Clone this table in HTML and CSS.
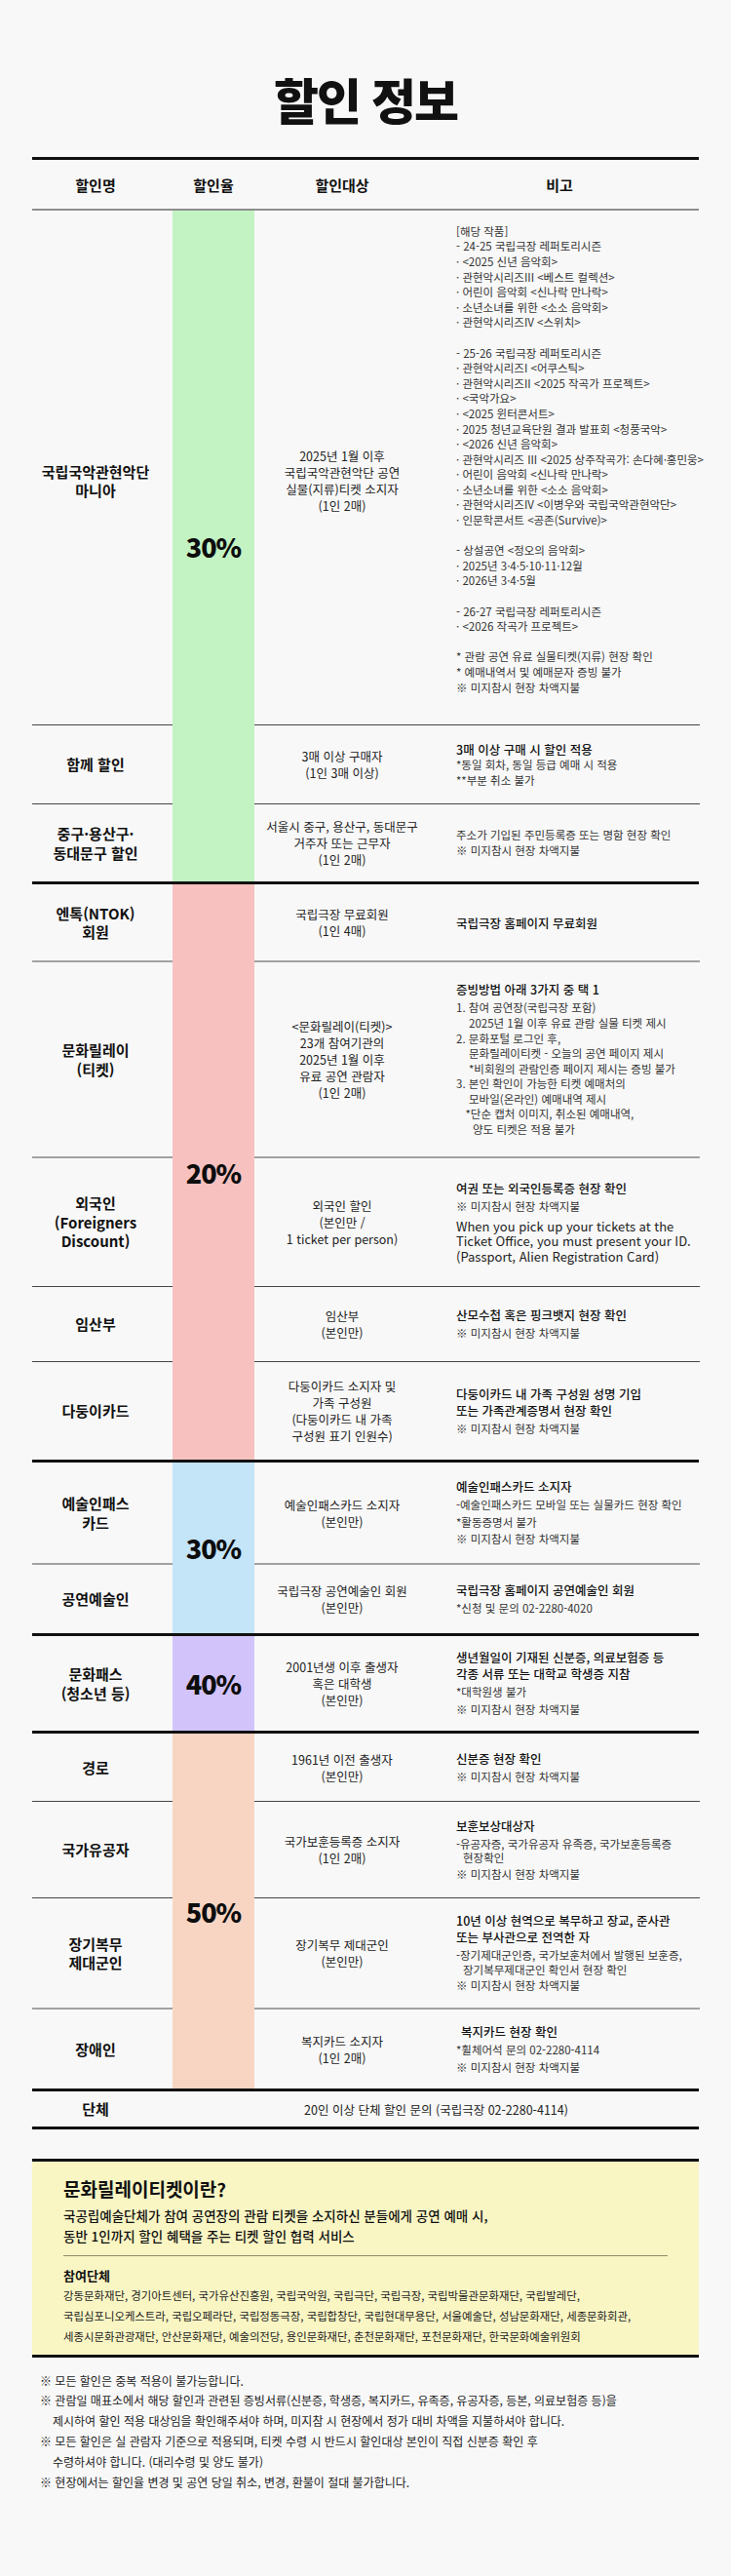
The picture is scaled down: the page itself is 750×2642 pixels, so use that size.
FILE: index.html
```html
<!DOCTYPE html>
<html lang="ko">
<head>
<meta charset="utf-8">
<title>할인 정보</title>
<link rel="stylesheet" href="styles.css">
</head>
<body>
<main class="page">
  <h1 class="title">할인 정보</h1>

  <section class="table">
    <div class="head">
      <div class="hc1">할인명</div>
      <div>할인율</div>
      <div>할인대상</div>
      <div class="hc4">비고</div>
    </div>

    <div class="grp g1">
      <div class="rate green">30%</div>
      <div class="row mania">
        <div class="lab"><p>국립국악관현악단<br>마니아</p></div>
        <div class="tgt"><p>2025년 1월 이후<br>국립국악관현악단 공연<br>실물(지류)티켓 소지자<br>(1인 2매)</p></div>
        <div class="rm long"><p>[해당 작품]<br>- 24-25 국립극장 레퍼토리시즌<br>· &lt;2025 신년 음악회&gt;<br>· 관현악시리즈III &lt;베스트 컬렉션&gt;<br>· 어린이 음악회 &lt;신나락 만나락&gt;<br>· 소년소녀를 위한 &lt;소소 음악회&gt;<br>· 관현악시리즈IV &lt;스위치&gt;<br><br>- 25-26 국립극장 레퍼토리시즌<br>· 관현악시리즈I &lt;어쿠스틱&gt;<br>· 관현악시리즈II &lt;2025 작곡가 프로젝트&gt;<br>· &lt;국악가요&gt;<br>· &lt;2025 윈터콘서트&gt;<br>· 2025 청년교육단원 결과 발표회 &lt;청풍국악&gt;<br>· &lt;2026 신년 음악회&gt;<br>· 관현악시리즈 III &lt;2025 상주작곡가: 손다혜·홍민웅&gt;<br>· 어린이 음악회 &lt;신나락 만나락&gt;<br>· 소년소녀를 위한 &lt;소소 음악회&gt;<br>· 관현악시리즈IV &lt;이병우와 국립국악관현악단&gt;<br>· 인문학콘서트 &lt;공존(Survive)&gt;<br><br>- 상설공연 &lt;정오의 음악회&gt;<br>· 2025년 3·4·5·10·11·12월<br>· 2026년 3·4·5월<br><br>- 26-27 국립극장 레퍼토리시즌<br>· &lt;2026 작곡가 프로젝트&gt;<br><br>* 관람 공연 유료 실물티켓(지류) 현장 확인<br>* 예매내역서 및 예매문자 증빙 불가<br>※ 미지참시 현장 차액지불</p></div>
      </div>
      <div class="row">
        <div class="lab"><p>함께 할인</p></div>
        <div class="tgt"><p>3매 이상 구매자<br>(1인 3매 이상)</p></div>
        <div class="rm tight"><p class="hd">3매 이상 구매 시 할인 적용</p><p>*동일 회차, 동일 등급 예매 시 적용</p><p>**부분 취소 불가</p></div>
      </div>
      <div class="row">
        <div class="lab"><p>중구·용산구·<br>동대문구 할인</p></div>
        <div class="tgt"><p>서울시 중구, 용산구, 동대문구<br>거주자 또는 근무자<br>(1인 2매)</p></div>
        <div class="rm tight"><p>주소가 기입된 주민등록증 또는 명함 현장 확인</p><p>※ 미지참시 현장 차액지불</p></div>
      </div>
    </div>

    <div class="grp g2">
      <div class="rate pink">20%</div>
      <div class="row">
        <div class="lab"><p>엔톡(NTOK)<br>회원</p></div>
        <div class="tgt"><p>국립극장 무료회원<br>(1인 4매)</p></div>
        <div class="rm"><p class="hd">국립극장 홈페이지 무료회원</p></div>
      </div>
      <div class="row lt">
        <div class="lab"><p>문화릴레이<br>(티켓)</p></div>
        <div class="tgt"><p>&lt;문화릴레이(티켓)&gt;<br>23개 참여기관의<br>2025년 1월 이후<br>유료 공연 관람자<br>(1인 2매)</p></div>
        <div class="rm">
          <p class="hd">증빙방법 아래 3가지 중 택 1</p>
          <p>
            <span class="ln">1. 참여 공연장(국립극장 포함)</span>
            <span class="ln i1">2025년 1월 이후 유료 관람 실물 티켓 제시</span>
            <span class="ln">2. 문화포털 로그인 후,</span>
            <span class="ln i1">문화릴레이티켓 - 오늘의 공연 페이지 제시</span>
            <span class="ln i1">*비회원의 관람인증 페이지 제시는 증빙 불가</span>
            <span class="ln">3. 본인 확인이 가능한 티켓 예매처의</span>
            <span class="ln i1">모바일(온라인) 예매내역 제시</span>
            <span class="ln i2">*단순 캡처 이미지, 취소된 예매내역,</span>
            <span class="ln i3">양도 티켓은 적용 불가</span>
          </p>
        </div>
      </div>
      <div class="row lt">
        <div class="lab"><p>외국인<br>(Foreigners<br>Discount)</p></div>
        <div class="tgt"><p>외국인 할인<br>(본인만 /<br>1 ticket per person)</p></div>
        <div class="rm"><p class="hd">여권 또는 외국인등록증 현장 확인</p><p>※ 미지참시 현장 차액지불</p><p class="en">When you pick up your tickets at the<br>Ticket Office, you must present your ID.<br>(Passport, Alien Registration Card)</p></div>
      </div>
      <div class="row">
        <div class="lab"><p>임산부</p></div>
        <div class="tgt"><p>임산부<br>(본인만)</p></div>
        <div class="rm"><p class="hd">산모수첩 혹은 핑크뱃지 현장 확인</p><p>※ 미지참시 현장 차액지불</p></div>
      </div>
      <div class="row">
        <div class="lab"><p>다둥이카드</p></div>
        <div class="tgt"><p>다둥이카드 소지자 및<br>가족 구성원<br>(다둥이카드 내 가족<br>구성원 표기 인원수)</p></div>
        <div class="rm"><p class="hd">다둥이카드 내 가족 구성원 성명 기입<br>또는 가족관계증명서 현장 확인</p><p>※ 미지참시 현장 차액지불</p></div>
      </div>
    </div>

    <div class="grp g3">
      <div class="rate blue">30%</div>
      <div class="row">
        <div class="lab"><p>예술인패스<br>카드</p></div>
        <div class="tgt"><p>예술인패스카드 소지자<br>(본인만)</p></div>
        <div class="rm"><p class="hd">예술인패스카드 소지자</p><p>-예술인패스카드 모바일 또는 실물카드 현장 확인</p><p>*활동증명서 불가</p><p>※ 미지참시 현장 차액지불</p></div>
      </div>
      <div class="row lt">
        <div class="lab"><p>공연예술인</p></div>
        <div class="tgt"><p>국립극장 공연예술인 회원<br>(본인만)</p></div>
        <div class="rm"><p class="hd">국립극장 홈페이지 공연예술인 회원</p><p>*신청 및 문의 02-2280-4020</p></div>
      </div>
    </div>

    <div class="grp g4">
      <div class="rate purple">40%</div>
      <div class="row">
        <div class="lab"><p>문화패스<br>(청소년 등)</p></div>
        <div class="tgt"><p>2001년생 이후 출생자<br>혹은 대학생<br>(본인만)</p></div>
        <div class="rm"><p class="hd">생년월일이 기재된 신분증, 의료보험증 등<br>각종 서류 또는 대학교 학생증 지참</p><p>*대학원생 불가</p><p>※ 미지참시 현장 차액지불</p></div>
      </div>
    </div>

    <div class="grp g5">
      <div class="rate peach">50%</div>
      <div class="row">
        <div class="lab"><p>경로</p></div>
        <div class="tgt"><p>1961년 이전 출생자<br>(본인만)</p></div>
        <div class="rm"><p class="hd">신분증 현장 확인</p><p>※ 미지참시 현장 차액지불</p></div>
      </div>
      <div class="row">
        <div class="lab"><p>국가유공자</p></div>
        <div class="tgt"><p>국가보훈등록증 소지자<br>(1인 2매)</p></div>
        <div class="rm"><p class="hd">보훈보상대상자</p><p class="dense">-유공자증, 국가유공자 유족증, 국가보훈등록증<span class="ind">현장확인</span></p><p>※ 미지참시 현장 차액지불</p></div>
      </div>
      <div class="row">
        <div class="lab"><p>장기복무<br>제대군인</p></div>
        <div class="tgt"><p>장기복무 제대군인<br>(본인만)</p></div>
        <div class="rm"><p class="hd">10년 이상 현역으로 복무하고 장교, 준사관<br>또는 부사관으로 전역한 자</p><p class="dense">-장기제대군인증, 국가보훈처에서 발행된 보훈증,<span class="ind">장기복무제대군인 확인서 현장 확인</span></p><p>※ 미지참시 현장 차액지불</p></div>
      </div>
      <div class="row lt">
        <div class="lab"><p>장애인</p></div>
        <div class="tgt"><p>복지카드 소지자<br>(1인 2매)</p></div>
        <div class="rm"><p class="hd hd-ind">복지카드 현장 확인</p><p>*휠체어석 문의 02-2280-4114</p><p>※ 미지참시 현장 차액지불</p></div>
      </div>
    </div>

    <div class="grp g6">
      <div class="row">
        <div class="lab"><p>단체</p></div>
        <div class="dan"><p>20인 이상 단체 할인 문의 (국립극장 02-2280-4114)</p></div>
      </div>
    </div>
  </section>

  <section class="relay">
    <h2 class="relay-title">문화릴레이티켓이란?</h2>
    <p class="relay-desc">국공립예술단체가 참여 공연장의 관람 티켓을 소지하신 분들에게 공연 예매 시,<br>동반 1인까지 할인 혜택을 주는 티켓 할인 협력 서비스</p>
    <h3 class="relay-sub">참여단체</h3>
    <p class="relay-list">강동문화재단, 경기아트센터, 국가유산진흥원, 국립국악원, 국립극단, 국립극장, 국립박물관문화재단, 국립발레단,<br>국립심포니오케스트라, 국립오페라단, 국립정동극장, 국립합창단, 국립현대무용단, 서울예술단, 성남문화재단, 세종문화회관,<br>세종시문화관광재단, 안산문화재단, 예술의전당, 용인문화재단, 춘천문화재단, 포천문화재단, 한국문화예술위원회</p>
  </section>

  <ul class="notes">
    <li>※ 모든 할인은 중복 적용이 불가능합니다.</li>
    <li>※ 관람일 매표소에서 해당 할인과 관련된 증빙서류(신분증, 학생증, 복지카드, 유족증, 유공자증, 등본, 의료보험증 등)을<br>제시하여 할인 적용 대상임을 확인해주셔야 하며, 미지참 시 현장에서 정가 대비 차액을 지불하셔야 합니다.</li>
    <li>※ 모든 할인은 실 관람자 기준으로 적용되며, 티켓 수령 시 반드시 할인대상 본인이 직접 신분증 확인 후<br>수령하셔야 합니다. (대리수령 및 양도 불가)</li>
    <li>※ 현장에서는 할인율 변경 및 공연 당일 취소, 변경, 환불이 절대 불가합니다.</li>
  </ul>
</main>
</body>
</html>
```

FILE: styles.css
```css
* { box-sizing: border-box; }

html, body {
  margin: 0;
  padding: 0;
}

body {
  background: #f8f8f8;
  color: #111;
  font-family: "Noto Sans CJK KR", "Noto Sans", sans-serif;
}

.page {
  width: 750px;
}

p { margin: 0; }

.title {
  margin: 0;
  height: 161px;
  padding-top: 71px;
  text-align: center;
  font-size: 50px;
  font-weight: 900;
  line-height: 60px;
  letter-spacing: -2px;
}

/* ---------- table ---------- */
.table {
  margin: 0 33px;
  border-top: 3px solid #111;
  border-bottom: 3px solid #111;
}

.head,
.grp {
  display: grid;
  grid-template-columns: 144px 84px 180px 277px;
}

.head {
  height: 52px;
  border-bottom: 2px solid #8e8e8e;
  align-items: center;
  text-align: center;
  font-size: 15px;
  font-weight: 700;
}

.head .hc1 { padding-right: 14px; }
.head .hc4 { padding-right: 11px; }

.grp + .grp { border-top: 3px solid #111; }

.g1 { grid-template-rows: 527px 81px 80px; }
.g2 { grid-template-rows: 78px 201px 133px 77px 101px; }
.g3 { grid-template-rows: 103px 72px; }
.g4 { grid-template-rows: 97px; }
.g5 { grid-template-rows: 69px 99px 113px 83px; }
.g6 { grid-template-rows: 36px; }

.row { display: contents; }

.rate {
  grid-column: 2;
  grid-row: 1 / -1;
  display: flex;
  align-items: center;
  justify-content: center;
  font-size: 27px;
  font-weight: 900;
  letter-spacing: -1px;
  color: #0d0d0d;
}

.green  { background: #c3f3c2; }
.pink   { background: #f6c1bf; }
.blue   { background: #c4e4f7; }
.purple { background: #d2c3fb; }
.peach  { background: #f8d5c2; }

.lab,
.tgt,
.rm,
.dan {
  display: flex;
  flex-direction: column;
  justify-content: center;
  white-space: nowrap;
}

.lab {
  grid-column: 1;
  align-items: center;
  text-align: center;
  padding-right: 14px;
  font-size: 15px;
  font-weight: 700;
  line-height: 19.5px;
}

.tgt {
  grid-column: 3;
  align-items: center;
  text-align: center;
  font-size: 12.5px;
  line-height: 17px;
  color: #222;
}

.rm {
  grid-column: 4;
  align-items: flex-start;
  padding-left: 27px;
  font-size: 11.5px;
  line-height: 15.6px;
  color: #333;
}

.dan {
  grid-column: 2 / 5;
  align-items: center;
  text-align: center;
  font-size: 12.5px;
  line-height: 17px;
  color: #222;
}

.row ~ .row > .lab,
.row ~ .row > .tgt,
.row ~ .row > .rm {
  border-top: 1px solid #454545;
}

.row.lt > .lab,
.row.lt > .tgt,
.row.lt > .rm {
  border-top: 2px solid #a2a2a2;
}

.mania > .lab,
.mania > .tgt {
  padding-top: 27px;
}

.rm.long { padding-bottom: 16px; }

.rm p + p { margin-top: 2px; }
.rm .hd + p { margin-top: 3px; }
.rm.tight p + p { margin-top: 0; }

.rm .hd {
  font-size: 12.5px;
  font-weight: 500;
  line-height: 17px;
  color: #111;
}

.rm .hd-ind { padding-left: 5px; }

.rm .en {
  margin-top: 4px;
  font-size: 13px;
  line-height: 15.8px;
  color: #222;
}

.rm .dense { line-height: 14.5px; }

.ln { display: block; }
.i1 { padding-left: 13px; }
.i2 { padding-left: 9.5px; }
.i3 { padding-left: 17px; }

.ind {
  display: block;
  padding-left: 7px;
}

/* ---------- relay box ---------- */
.relay {
  margin: 30px 33px 0;
  padding: 15px 32px 7px;
  background: #faf6c4;
  border-top: 3px solid #111;
  border-bottom: 3px solid #111;
}

.relay-title {
  margin: 0;
  font-size: 19px;
  font-weight: 700;
  line-height: 26px;
}

.relay-desc {
  margin-top: 4px;
  padding-bottom: 9.5px;
  border-bottom: 1.5px solid #8d8a6a;
  font-size: 13.5px;
  font-weight: 500;
  line-height: 20.6px;
  white-space: nowrap;
}

.relay-sub {
  margin: 10px 0 0;
  font-size: 13px;
  font-weight: 700;
  line-height: 20px;
}

.relay-list {
  font-size: 11.4px;
  line-height: 21.3px;
  color: #222;
  white-space: nowrap;
}

/* ---------- notes ---------- */
.notes {
  list-style: none;
  margin: 14px 0 0;
  padding: 0 0 0 41px;
  font-size: 12px;
  line-height: 20.8px;
  color: #222;
  white-space: nowrap;
}

.notes li {
  padding-left: 13px;
  text-indent: -13px;
}
```
